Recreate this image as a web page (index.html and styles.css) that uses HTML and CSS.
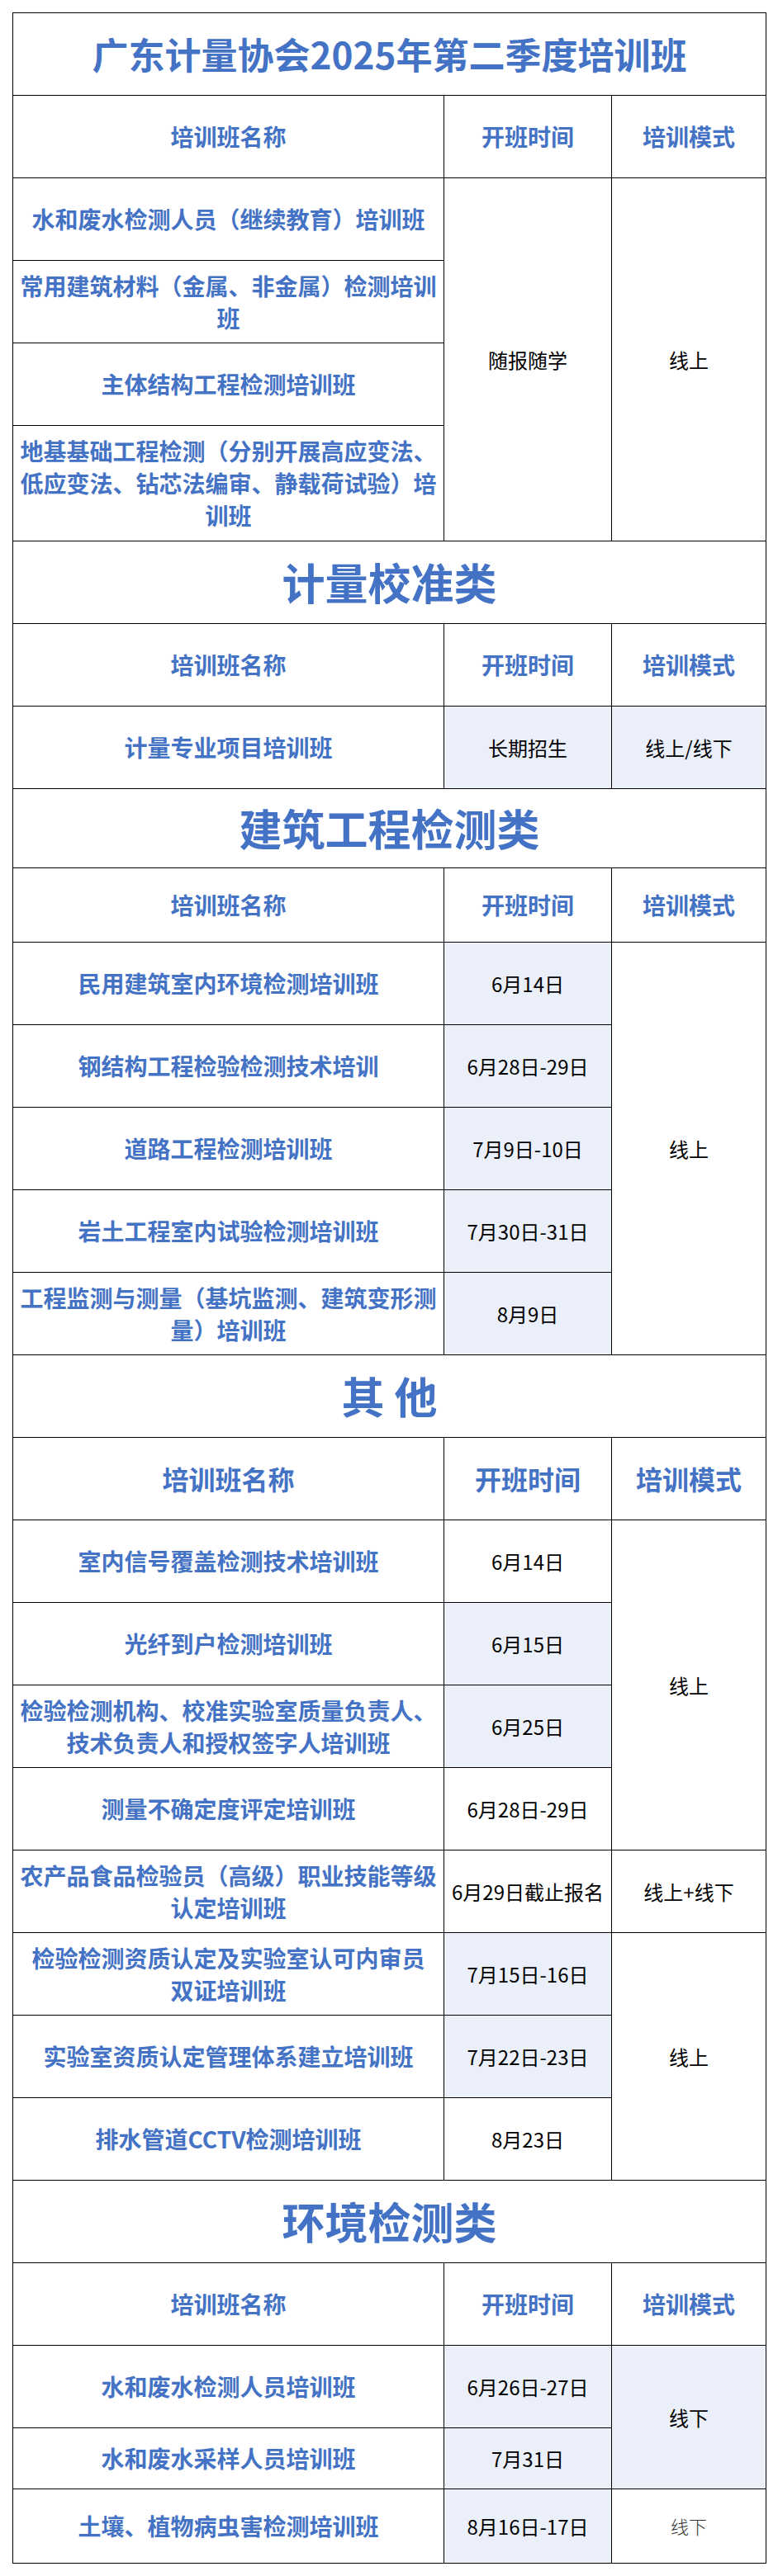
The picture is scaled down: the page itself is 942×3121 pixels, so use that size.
FILE: index.html
```html
<!DOCTYPE html>
<html lang="zh-CN">
<head>
<meta charset="utf-8">
<title>广东计量协会2025年第二季度培训班</title>
<link rel="stylesheet" href="styles.css">
</head>
<body>
<div class="page">
<table class="plan">
  <colgroup>
    <col class="c-name">
    <col class="c-date">
    <col class="c-mode">
  </colgroup>
  <tbody>
    <tr class="h100"><td colspan="3" class="title">广东计量协会2025年第二季度培训班</td></tr>
    <tr class="h100"><td class="hd">培训班名称</td><td class="hd">开班时间</td><td class="hd">培训模式</td></tr>
    <tr class="h100"><td class="nm">水和废水检测人员（继续教育）培训班</td><td class="tx" rowspan="4">随报随学</td><td class="tx" rowspan="4">线上</td></tr>
    <tr class="h100"><td class="nm">常用建筑材料（金属、非金属）检测培训班</td></tr>
    <tr class="h100"><td class="nm">主体结构工程检测培训班</td></tr>
    <tr class="h140"><td class="nm">地基基础工程检测（分别开展高应变法、低应变法、钻芯法编审、静载荷试验）培训班</td></tr>

    <tr class="h100"><td colspan="3" class="sec">计量校准类</td></tr>
    <tr class="h100"><td class="hd">培训班名称</td><td class="hd">开班时间</td><td class="hd">培训模式</td></tr>
    <tr class="h100"><td class="nm">计量专业项目培训班</td><td class="tx tint">长期招生</td><td class="tx tint">线上/线下</td></tr>

    <tr class="h96"><td colspan="3" class="sec">建筑工程检测类</td></tr>
    <tr class="h90"><td class="hd">培训班名称</td><td class="hd">开班时间</td><td class="hd">培训模式</td></tr>
    <tr class="h100"><td class="nm">民用建筑室内环境检测培训班</td><td class="tx tint">6月14日</td><td class="tx" rowspan="5">线上</td></tr>
    <tr class="h100"><td class="nm">钢结构工程检验检测技术培训</td><td class="tx tint">6月28日-29日</td></tr>
    <tr class="h100"><td class="nm">道路工程检测培训班</td><td class="tx tint">7月9日-10日</td></tr>
    <tr class="h100"><td class="nm">岩土工程室内试验检测培训班</td><td class="tx tint">7月30日-31日</td></tr>
    <tr class="h100"><td class="nm">工程监测与测量（基坑监测、建筑变形测量）培训班</td><td class="tx tint">8月9日</td></tr>

    <tr class="h100"><td colspan="3" class="sec">其 他</td></tr>
    <tr class="h100"><td class="hd hd-lg">培训班名称</td><td class="hd hd-lg">开班时间</td><td class="hd hd-lg">培训模式</td></tr>
    <tr class="h100"><td class="nm">室内信号覆盖检测技术培训班</td><td class="tx">6月14日</td><td class="tx" rowspan="4">线上</td></tr>
    <tr class="h100"><td class="nm">光纤到户检测培训班</td><td class="tx tint">6月15日</td></tr>
    <tr class="h100"><td class="nm">检验检测机构、校准实验室质量负责人、技术负责人和授权签字人培训班</td><td class="tx tint">6月25日</td></tr>
    <tr class="h100"><td class="nm">测量不确定度评定培训班</td><td class="tx">6月28日-29日</td></tr>
    <tr class="h100"><td class="nm">农产品食品检验员（高级）职业技能等级认定培训班</td><td class="tx">6月29日截止报名</td><td class="tx">线上+线下</td></tr>
    <tr class="h100"><td class="nm">检验检测资质认定及实验室认可内审员<br>双证培训班</td><td class="tx tint">7月15日-16日</td><td class="tx" rowspan="3">线上</td></tr>
    <tr class="h100"><td class="nm">实验室资质认定管理体系建立培训班</td><td class="tx tint">7月22日-23日</td></tr>
    <tr class="h100"><td class="nm">排水管道CCTV检测培训班</td><td class="tx">8月23日</td></tr>

    <tr class="h100"><td colspan="3" class="sec">环境检测类</td></tr>
    <tr class="h100"><td class="hd">培训班名称</td><td class="hd">开班时间</td><td class="hd">培训模式</td></tr>
    <tr class="h100"><td class="nm">水和废水检测人员培训班</td><td class="tx tint">6月26日-27日</td><td class="tx tint" rowspan="2">线下</td></tr>
    <tr class="h74"><td class="nm">水和废水采样人员培训班</td><td class="tx tint">7月31日</td></tr>
    <tr class="h90"><td class="nm">土壤、植物病虫害检测培训班</td><td class="tx tint">8月16日-17日</td><td class="tx light">线下</td></tr>
  </tbody>
</table>
</div>
</body>
</html>
```
FILE: styles.css
```css
html, body {
  margin: 0;
  padding: 0;
  background: #ffffff;
}

body {
  font-family: "Noto Sans CJK SC", "Microsoft YaHei", sans-serif;
  color: #000000;
}

.page {
  padding: 15px 15px 16px 15px;
}

.plan {
  width: 912px;
  border-collapse: collapse;
  table-layout: fixed;
}

.c-name { width: 522px; }
.c-date { width: 203px; }
.c-mode { width: 187px; }

.plan td {
  border: 1.5px solid #000000;
  text-align: center;
  vertical-align: middle;
  padding: 0 6px;
  overflow: hidden;
}

.h140 { height: 140px; }
.h100 { height: 100px; }
.h96 { height: 96px; }
.h90 { height: 90px; }
.h74 { height: 74px; }

.title {
  font-size: 44px;
  font-weight: 700;
  color: #4472c4;
  line-height: 1.2;
}

.sec {
  font-size: 52px;
  font-weight: 700;
  color: #4472c4;
  line-height: 1.2;
}

.hd {
  font-size: 28px;
  font-weight: 700;
  color: #4472c4;
  line-height: 1.4;
}

.hd-lg {
  font-size: 32px;
}

.nm {
  font-size: 28px;
  font-weight: 700;
  color: #4472c4;
  line-height: 39px;
}

.tx {
  font-size: 24px;
  font-weight: 400;
  color: #000000;
  line-height: 1.4;
  padding: 0 2px;
}

.tint {
  background: #eaeff9;
}

.light {
  font-size: 22px;
  font-weight: 300;
  color: #333333;
}
```
